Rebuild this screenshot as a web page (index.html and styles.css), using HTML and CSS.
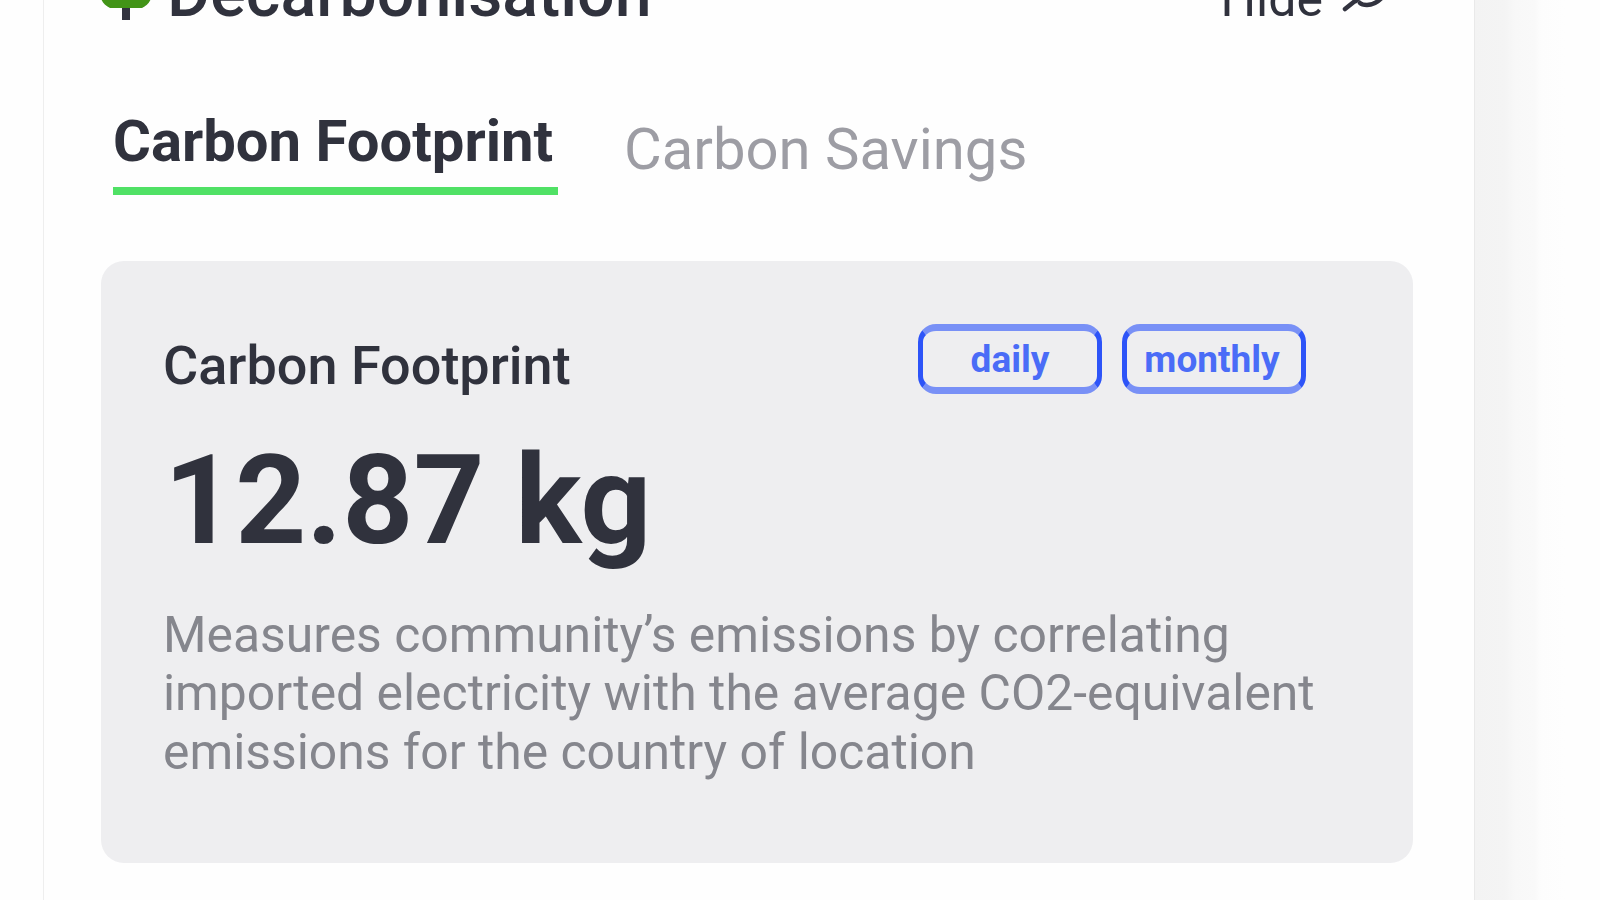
FILE: index.html
```html
<!DOCTYPE html>
<html lang="en">
<head>
    <meta charset="UTF-8">
    <meta name="viewport" content="width=device-width, initial-scale=1.0">
    <title>Decarbonisation</title>
    <link rel="stylesheet" href="styles.css">
</head>
<body>

    <div class="panel">

        <!-- Header, scrolled partly out of view -->
        <div class="header">
            <svg class="tree-icon" viewBox="0 0 54 60" width="54" height="60">
                <rect x="21" y="44" width="8" height="16" fill="#32333f"/>
                <path d="M25 2 C42 2 52 20 50 38 C49 43 45 46 41 48 H9 C5 46 1 43 0 38 C-2 20 8 2 25 2 Z" fill="#429417"/>
            </svg>
            <h1>Decarbonisation</h1>
            <div class="hide">
                <span>Hide</span>
                <svg class="eye-icon" viewBox="0 0 48 40" width="48" height="40" fill="none" stroke="#32333f" stroke-width="4.5" stroke-linecap="round">
                    <path d="M3 18 C10 6 18 3 24 3 C32 3 40 8 45 18 C38 29 31 32 25 32 C22 32 19 31 18 30"/>
                    <path d="M3 36 L13 28 L43 2"/>
                    <path d="M14 28 L20 22"/>
                </svg>
            </div>
        </div>

        <!-- Tabs -->
        <div class="tabs">
            <a class="tab active">Carbon Footprint</a>
            <a class="tab">Carbon Savings</a>
        </div>

        <!-- Footprint Card -->
        <div class="card">
            <div class="card-top">
                <h2>Carbon Footprint</h2>
                <div class="buttons">
                    <button>daily</button>
                    <button class="monthly">monthly</button>
                </div>
            </div>
            <div class="value">12.87 kg</div>
            <p>
                Measures community’s emissions by correlating<br>
                imported electricity with the average CO2-equivalent<br>
                emissions for the country of location
            </p>
        </div>
    </div>

    <div class="shade"></div>

</body>
</html>
```
FILE: styles.css
```css
* {
    margin: 0;
    padding: 0;
    box-sizing: border-box;
    font-family: Roboto, Arial, sans-serif;
}
body {
    display: flex;
    height: 900px;
    padding-left: 43px;
    background-color: #fefefe;
    color: #30323d;
    overflow: hidden;
}
.panel {
    width: 1432px;
    height: 900px;
    padding: 0 60px 0 57px;
    background-color: #fefefe;
    border-left: 1px solid #eeeeee;
    border-right: 1px solid #e9e9e9;
}
.shade {
    width: 90px;
    background: linear-gradient(to right, #f3f3f3 0, #f4f4f4 30px, #f8f8f8 40px, #f9f9f9 60px, #fdfdfd 66px, #fefefe 90px);
}
.header {
    display: flex;
    height: 60px;
    margin-top: -40px;
}
.tree-icon {
    flex: none;
    margin-right: 12px;
}
.header h1 {
    font-size: 66.3px;
    font-weight: 500;
    line-height: 66px;
    white-space: nowrap;
}
.hide {
    display: flex;
    margin-left: auto;
    margin-right: 24px;
    font-size: 50px;
    line-height: 79px;
}
.eye-icon {
    margin: 13px 0 0 19px;
}
.tabs {
    display: flex;
    align-items: flex-start;
    height: 175px;
    margin: 66px 0 0 12px;
}
.tab {
    height: 109px;
    padding-top: 30px;
    font-size: 58px;
    line-height: 66px;
    color: #9d9da4;
    white-space: nowrap;
}
.tab.active {
    width: 445px;
    margin-right: 66px;
    padding-top: 22px;
    font-weight: 700;
    color: #30323d;
    border-bottom: 8px solid #50e165;
}
.card {
    width: 1312px;
    height: 602px;
    padding: 63px 50px 0 62px;
    background-color: #eeeef0;
    border-radius: 23px;
}
.card-top {
    display: flex;
    justify-content: space-between;
    height: 122px;
}
.card-top h2 {
    padding-top: 10px;
    font-size: 54px;
    font-weight: 500;
    line-height: 64px;
}
.buttons {
    display: flex;
    gap: 20px;
    margin-right: 57px;
}
.buttons button {
    width: 184px;
    height: 70px;
    padding-top: 1px;
    font-size: 37px;
    font-weight: 700;
    line-height: 56px;
    color: #4a6cf7;
    background: none;
    border: 5px solid #2d54f8;
    border-top: 7px solid #7890f6;
    border-bottom: 7px solid #7890f6;
    border-radius: 18px;
}
.buttons .monthly {
    padding-right: 4px;
}
.value {
    height: 160px;
    padding-left: 1px;
    font-size: 124px;
    font-weight: 700;
    line-height: 110px;
    white-space: nowrap;
}
.card p {
    font-size: 49.85px;
    line-height: 58.3px;
    color: #85868d;
    white-space: nowrap;
}
```
